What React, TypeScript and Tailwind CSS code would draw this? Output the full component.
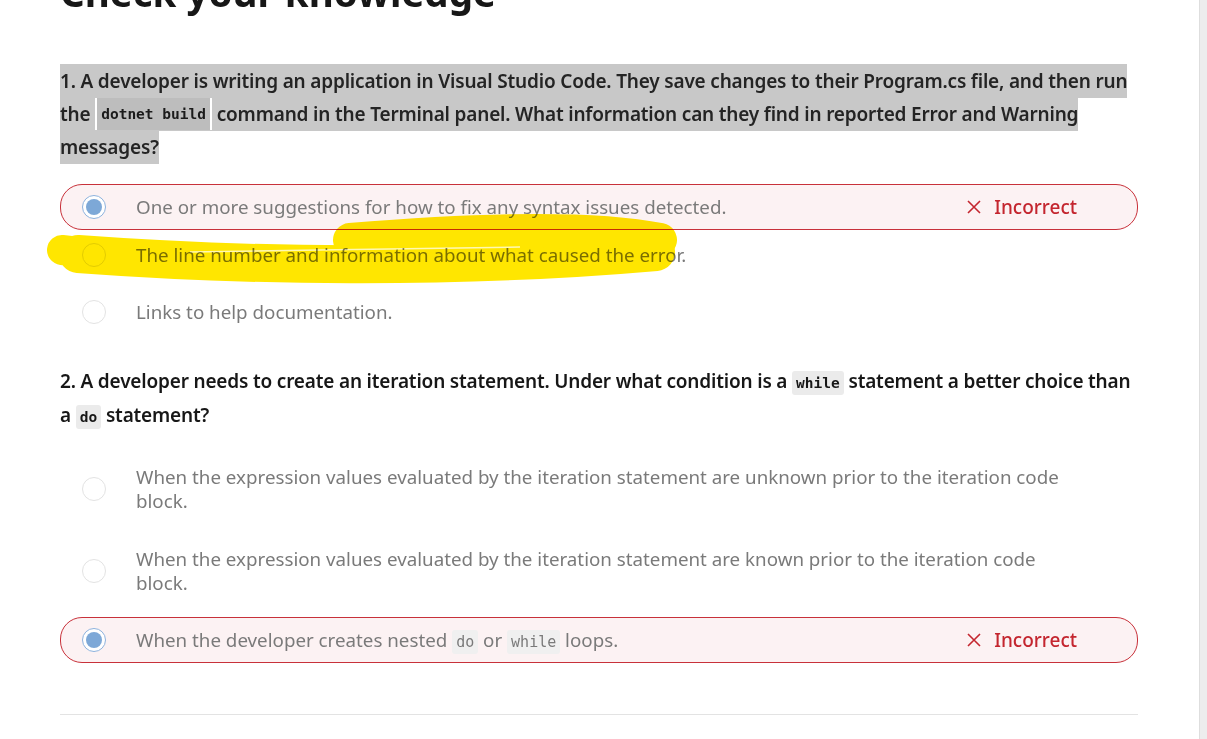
const sans = "font-['Noto_Sans','Open_Sans',sans-serif]";

function Radio({ checked }: { checked?: boolean }) {
  if (checked) {
    return (
      <div className="flex h-6 w-6 shrink-0 items-center justify-center rounded-full border-[1.5px] border-[#8db2dd] bg-white">
        <div className="h-4 w-4 rounded-full bg-[#7da8d7]" />
      </div>
    );
  }
  return <div className="h-6 w-6 shrink-0 rounded-full border border-[#e3e3e3] bg-white" />;
}

function Code({ children }: { children: React.ReactNode }) {
  return (
    <code className="rounded-[3px] bg-[#f0f0f0] px-[4px] py-[3px] font-['DejaVu_Sans_Mono',monospace] text-[15px] leading-none text-[#7a7a7a]">
      {children}
    </code>
  );
}

function QCode({ children }: { children: React.ReactNode }) {
  return (
    <code className="rounded-[3px] bg-[#ebebeb] px-[4px] py-[4px] font-['DejaVu_Sans_Mono',monospace] text-[14.5px] font-bold leading-none tracking-normal text-[#171717]">
      {children}
    </code>
  );
}

function Option({
  children,
  checked,
  wrong,
  className,
}: {
  children: React.ReactNode;
  checked?: boolean;
  wrong?: boolean;
  className?: string;
}) {
  return (
    <div
      className={`flex items-center rounded-[22px] border pl-[21px] pr-[60px] ${
        wrong ? "border-[#c8313a] bg-[#fcf2f3]" : "border-transparent"
      } ${className ?? ""}`}
    >
      <Radio checked={checked} />
      <div className="ml-[30px] flex-1 text-[18.75px] leading-[24px] text-[#7a7a7a]">{children}</div>
      {wrong && (
        <div className="ml-4 flex items-center gap-[12px] text-[19px] font-medium text-[#c4262f]">
          <svg width="16" height="16" viewBox="0 0 16 16" fill="none" stroke="currentColor" strokeWidth="1.6">
            <path d="M2 2 L14 14 M14 2 L2 14" />
          </svg>
          <span>Incorrect</span>
        </div>
      )}
    </div>
  );
}

export default function App() {
  return (
    <div className={`relative flex h-[739px] overflow-hidden bg-white ${sans}`}>
      <main className="flex-1 pl-[60px] pr-[61px]">
        <h1 className="-mt-[32px] text-[38.5px] font-bold leading-[48px] text-[#171717]">Check your knowledge</h1>

        <p className="mt-[49px] text-[19px] font-semibold leading-[33px] tracking-[-0.18px] text-[#242424]">
          <span className="box-decoration-clone bg-[#c8c8c8] py-[4px]">
            1. A developer is writing an application in Visual Studio Code. They save changes to their Program.cs file,
            and then run
            <br />
            the{" "}
            <code className="inline-block border-x-2 border-white bg-[#bdbdbd] px-[4px] align-top font-['DejaVu_Sans_Mono',monospace] text-[14.5px] font-bold leading-[32px] tracking-normal text-[#1b1b1b]">
              dotnet build
            </code>{" "}
            command in the Terminal panel. What information can they find in reported Error and Warning
            <br />
            messages?
          </span>
        </p>

        <div className="mt-[20px]">
          <Option checked wrong className="h-[46px]">
            One or more suggestions for how to fix any syntax issues detected.
          </Option>
          <Option className="mt-[2px] h-[46px]">The line number and information about what caused the error.</Option>
          <Option className="mt-[11px] h-[46px]">Links to help documentation.</Option>
        </div>

        <p className="mt-[29px] text-[19px] font-semibold leading-[34px] tracking-[-0.18px] text-[#171717]">
          2. A developer needs to create an iteration statement. Under what condition is a <QCode>while</QCode> statement
          a better choice than
          <br />a <QCode>do</QCode> statement?
        </p>

        <div className="mt-[21px]">
          <Option className="h-[72px]">
            When the expression values evaluated by the iteration statement are unknown prior to the iteration code
            block.
          </Option>
          <Option className="mt-[10px] h-[72px]">
            When the expression values evaluated by the iteration statement are known prior to the iteration code block.
          </Option>
          <Option checked wrong className="mt-[10px] h-[46px]">
            When the developer creates nested <Code>do</Code> or <Code>while</Code> loops.
          </Option>
        </div>

        <div className="mt-[51px] border-t border-[#e3e3e3]" />
      </main>

      <div className="w-2 shrink-0 border-l border-[#dedede] bg-[#ededed]" />

      {/* marker scribble over option 2 */}
      <svg
        className="pointer-events-none absolute left-0 top-0 mix-blend-multiply"
        width="1207"
        height="739"
        viewBox="0 0 1207 739"
      >
        <g stroke="#ffe600" strokeLinecap="round" strokeLinejoin="round" fill="none">
          <path d="M78 254 C 240 266, 450 270, 656 252" strokeWidth="38" />
          <path d="M350 240 C 470 230, 590 226, 660 240" strokeWidth="34" />
          <path d="M62 250 L 130 258" strokeWidth="30" />
        </g>
        <path d="M190 252 C 300 250, 420 249, 520 247" stroke="#ffffff" strokeWidth="1.5" opacity="0.7" fill="none" />
      </svg>
    </div>
  );
}
